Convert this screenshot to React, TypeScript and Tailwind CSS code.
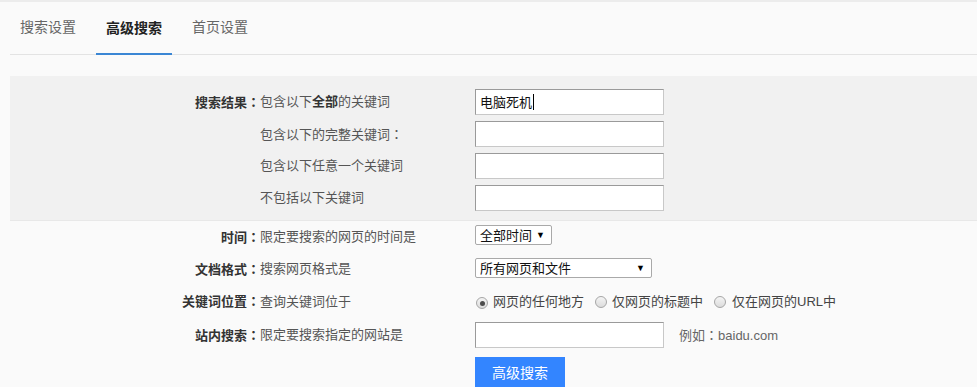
import React from "react";

const font = { fontFamily: '"Liberation Sans", "Noto Sans CJK SC", sans-serif' };

function C() {
  return <span className="font-['Noto_Sans_CJK_TC']">：</span>;
}

function Radio({ checked }: { checked?: boolean }) {
  return (
    <span className="relative inline-flex h-[12px] w-[12px] items-center justify-center rounded-full border border-[#a6a6a6] bg-gradient-to-b from-[#f4f4f4] to-[#dcdcdc]">
      {checked && <span className="h-[5px] w-[5px] rounded-full bg-[#4d4d4d]" />}
    </span>
  );
}

function TextInput({ value, caret, w = "w-[189px]" }: { value?: string; caret?: boolean; w?: string }) {
  return (
    <div
      className={`flex h-[26px] ${w} items-center border border-[#c8c8c8] border-l-[#9a9a9a] border-t-[#9a9a9a] bg-white pl-[4px] text-[13px] leading-none text-[#111]`}
    >
      {value}
      {caret && <span className="ml-[1px] inline-block h-[16px] w-[1px] bg-black" />}
    </div>
  );
}

function Select({ label, w }: { label: string; w: string }) {
  return (
    <div
      className={`flex h-[20px] ${w} items-center justify-between rounded-[2px] border border-[#a9a9a9] bg-white pl-[4px] pr-[6px] text-[13px] leading-none text-[#111]`}
    >
      <span>{label}</span>
      <span className="text-[9px] text-black">▼</span>
    </div>
  );
}

function Row({
  label,
  desc,
  children,
  h = "h-[32px]",
}: {
  label?: React.ReactNode;
  desc: React.ReactNode;
  children: React.ReactNode;
  h?: string;
}) {
  return (
    <div className={`flex ${h} items-center`}>
      <div className="w-[250px] text-right text-[13px] font-bold text-[#333]">
        {label}
        {label && <C />}
      </div>
      <div className="w-[215px] text-[13px] text-[#555]">{desc}</div>
      <div className="flex items-center">{children}</div>
    </div>
  );
}

export default function App() {
  return (
    <div style={font} className="min-h-[387px] w-[977px] overflow-hidden border-t-2 border-[#ececec] bg-[#fafafa]">
      <div className="ml-[10px] flex h-[53px] gap-[10px] border-b border-[#e3e3e3]">
        <div className="flex items-center px-[10px] pb-[1px] text-[14px] text-[#666]">搜索设置</div>
        <div className="-mb-[1px] flex items-center border-b-2 border-[#3a86d4] px-[10px] pt-[1px] text-[14px] font-bold text-[#222]">
          高级搜索
        </div>
        <div className="flex items-center px-[10px] pb-[1px] text-[14px] text-[#666]">首页设置</div>
      </div>

      <div className="ml-[10px] mt-[21px] border-b border-[#e8e8e8] bg-[#f1f1f1] pb-[6px] pt-[10px]">
        <Row label="搜索结果" desc={<>包含以下<b className="text-[#333]">全部</b>的关键词</>}>
          <TextInput value="电脑死机" caret />
        </Row>
        <Row desc={<>包含以下的完整关键词<C /></>}>
          <TextInput />
        </Row>
        <Row desc="包含以下任意一个关键词">
          <TextInput />
        </Row>
        <Row desc="不包括以下关键词">
          <TextInput />
        </Row>
      </div>

      <div className="ml-[10px]">
        <Row label="时间" desc="限定要搜索的网页的时间是">
          <div className="-mt-[4px]">
            <Select label="全部时间" w="w-[77px]" />
          </div>
        </Row>
        <Row label="文档格式" desc="搜索网页格式是">
          <div className="-mt-[2px]">
            <Select label="所有网页和文件" w="w-[177px]" />
          </div>
        </Row>
        <Row label="关键词位置" desc="查询关键词位于" h="h-[33px]">
          <div className="flex items-center text-[13px] text-[#444]">
            <span className="flex items-center">
              <span className="ml-[1px] mr-[5px]"><Radio checked /></span>
              网页的任何地方
            </span>
            <span className="ml-[11px] flex items-center">
              <Radio />
              <span className="ml-[5px]">仅网页的标题中</span>
            </span>
            <span className="ml-[11px] flex items-center">
              <Radio />
              <span className="ml-[6px]">仅在网页的URL中</span>
            </span>
          </div>
        </Row>
        <Row label="站内搜索" desc="限定要搜索指定的网站是" h="h-[34px]">
          <TextInput />
          <span className="ml-[15px] text-[13px] text-[#666]">例如<C />baidu.com</span>
        </Row>
        <div className="ml-[465px] mt-[5px] flex h-[32px] w-[90px] items-center justify-center bg-[#3385ff] text-[14px] text-white">
          高级搜索
        </div>
      </div>
    </div>
  );
}
